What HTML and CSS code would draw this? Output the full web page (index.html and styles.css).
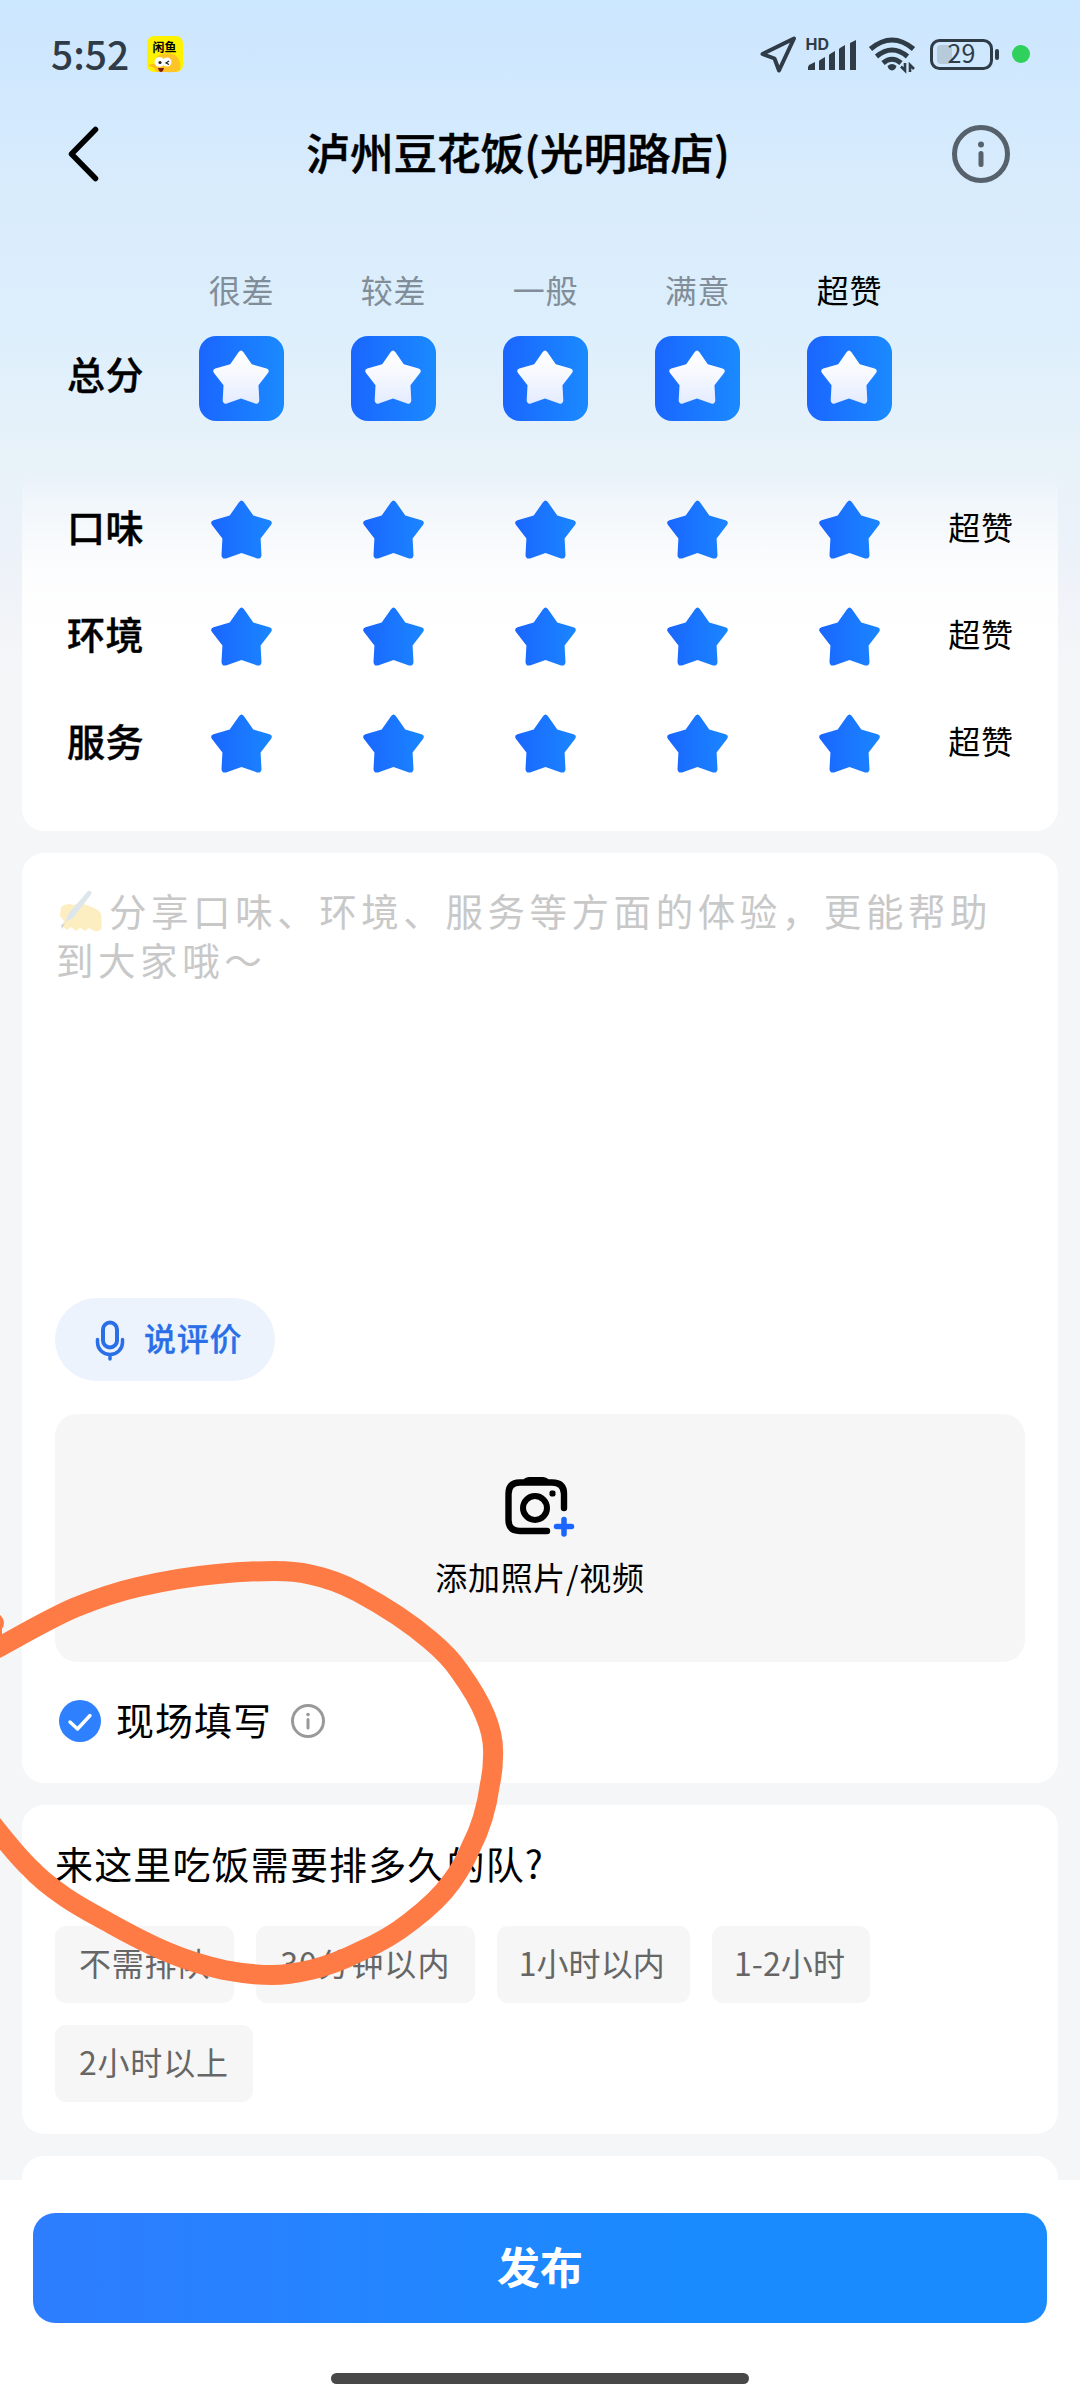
FILE: index.html
```html
<!DOCTYPE html>
<html lang="zh-CN">
<head>
<meta charset="utf-8">
<title>泸州豆花饭(光明路店)</title>
<link rel="stylesheet" href="styles.css">
</head>
<body>
<svg class="defs" width="0" height="0" aria-hidden="true">
  <defs>
    <linearGradient id="blue" x1="0" x2="1" y1="0" y2="0"><stop offset="0" stop-color="#1a66ff"/><stop offset="1" stop-color="#1a86ff"/></linearGradient>
    <linearGradient id="white" x1="0" x2="0" y1="0" y2="1"><stop offset="0" stop-color="#fff"/><stop offset=".4" stop-color="#f8faff"/><stop offset="1" stop-color="#e3ebff"/></linearGradient>
    <path id="star" d="M28 2.2Q30.500 -1.200 33 2.200L42.300 15.600L58.500 20.200Q62.300 21.600 60 25L49.600 38.600L50.500 55.200Q50 59.400 46 58.400L30.500 53L15 58.400Q11 59.400 10.500 55.200L11.400 38.600L1 25Q-1.300 21.600 2.500 20.200L18.700 15.600Z"/>
  </defs>
</svg>
<div class="screen">
  <header class="status">
    <div class="status-side">
      <span class="time">5:52</span>
      <svg class="app" width="38" height="38" viewBox="0 0 38 38">
        <rect x="1" y="1" width="36" height="36" rx="7" fill="#fdf200"/>
        <text class="app-name" x="18.500" y="17" text-anchor="middle">闲鱼</text>
        <path d="M9 35Q7 26 12 21Q19 16 29 20Q36 25 34 35Q30 38 21 37H14Q10 37 9 35Z" fill="#ffc527"/>
        <path d="M2 30l6-1 3 5z" fill="#ffb81c"/>
        <circle cx="13.500" cy="27" r="5" fill="#fff"/><circle cx="21" cy="27" r="4.500" fill="#fff"/>
        <circle cx="14" cy="27.500" r="1.600" fill="#222"/>
        <path d="M23 26l-3 2 3 1.500" fill="none" stroke="#222" stroke-width="1.200"/>
        <path d="M12 33h6q-1 4-3 4t-3-4z" fill="#7c1b12"/>
      </svg>
    </div>
    <svg class="indicators" width="280" height="44" viewBox="0 0 280 44">
      <path d="M2.500 22L34 6.500L19 38.500L14.500 26.500Z" fill="none" stroke="#2f3c48" stroke-width="4" stroke-linejoin="round"/>
      <text class="hd" x="45.500" y="18">HD</text>
      <g fill="#2f3c48">
        <path d="M49 33l6-3v8h-7v-3z"/><path d="M60 28l5-3v13h-6v-9z"/><path d="M70 22l5-3v19h-6V23z"/><path d="M80 16l5-3v25h-6V17z"/><path d="M90 11l6-3v30h-6z"/>
        <path d="M127.500 34q4.500-4 9 0q-1 4-4.500 4.500q-3.500-.5-4.500-4.500z"/>
      </g>
      <g fill="none" stroke="#2f3c48" stroke-width="5">
        <path d="M110.500 17Q132 -1 153.500 17"/><path d="M116.500 24.500Q132 11.500 147.500 24.500"/><path d="M123 31Q132 23.500 141 31"/>
      </g>
      <path d="M141 34.500l4 4V31M150 40V33l4 4" fill="none" stroke="#2f3c48" stroke-width="2.600"/>
      <rect x="171.500" y="8.500" width="60" height="28" rx="8" fill="none" stroke="#2f3c48" stroke-width="3"/>
      <rect x="177" y="13" width="15" height="19" rx="4" fill="#b7cad9"/>
      <rect x="235" y="17" width="4" height="11" rx="2" fill="#2f3c48"/>
      <text class="battery" x="201.500" y="31" text-anchor="middle">29</text>
      <circle cx="261" cy="22" r="9" fill="#2fd05c"/>
    </svg>
  </header>

  <nav class="nav">
    <svg width="40" height="60" viewBox="0 0 40 60"><path d="M28.500 5.500L4.500 30L28.500 54.500" fill="none" stroke="#000" stroke-width="5.500" stroke-linecap="round" stroke-linejoin="round"/></svg>
    <h1>泸州豆花饭(光明路店)</h1>
    <svg width="60" height="60" viewBox="0 0 60 60"><circle cx="30" cy="30" r="26.500" fill="none" stroke="#56616b" stroke-width="5"/><circle cx="30" cy="20.500" r="3" fill="#56616b"/><path d="M30 29.500v11" stroke="#56616b" stroke-width="5" stroke-linecap="round"/></svg>
  </nav>

  <section class="overall">
    <div class="grid captions"><i></i><span>很差</span><span>较差</span><span>一般</span><span>满意</span><span class="on">超赞</span></div>
    <div class="grid tiles"><b>总分</b>
      <div class="tile"><svg width="56" height="54" viewBox="0 0 61 59"><use href="#star" fill="url(#white)"/></svg></div>
      <div class="tile"><svg width="56" height="54" viewBox="0 0 61 59"><use href="#star" fill="url(#white)"/></svg></div>
      <div class="tile"><svg width="56" height="54" viewBox="0 0 61 59"><use href="#star" fill="url(#white)"/></svg></div>
      <div class="tile"><svg width="56" height="54" viewBox="0 0 61 59"><use href="#star" fill="url(#white)"/></svg></div>
      <div class="tile"><svg width="56" height="54" viewBox="0 0 61 59"><use href="#star" fill="url(#white)"/></svg></div>
    </div>
  </section>

  <section class="card ratings">
    <div class="grid row"><b>口味</b><svg class="star"><use href="#star"/></svg><svg class="star"><use href="#star"/></svg><svg class="star"><use href="#star"/></svg><svg class="star"><use href="#star"/></svg><svg class="star"><use href="#star"/></svg><span>超赞</span></div>
    <div class="grid row"><b>环境</b><svg class="star"><use href="#star"/></svg><svg class="star"><use href="#star"/></svg><svg class="star"><use href="#star"/></svg><svg class="star"><use href="#star"/></svg><svg class="star"><use href="#star"/></svg><span>超赞</span></div>
    <div class="grid row"><b>服务</b><svg class="star"><use href="#star"/></svg><svg class="star"><use href="#star"/></svg><svg class="star"><use href="#star"/></svg><svg class="star"><use href="#star"/></svg><svg class="star"><use href="#star"/></svg><span>超赞</span></div>
  </section>

  <section class="card review">
    <p class="placeholder"><svg class="pen" width="44" height="42" viewBox="0 0 44 42"><path d="M2 17Q8 12 14 15L22 13L35 18Q43 21 42.500 28V39Q40 42 35 41L30 38L26 41L21 38L17 41L12 37L8 40L3 36L5 31L1 26Z" fill="#fdeec2"/><path d="M29 1q4-1 3.500 3L14 28l-8 4 4-9z" fill="#dde6eb"/><path d="M2 35l4-2-3 6z" fill="#d5d3dc"/></svg>分享口味、环境、服务等方面的体验，更能帮助<br>到大家哦～</p>
    <button class="voice"><svg width="32" height="42" viewBox="0 0 32 42"><rect x="9" y="3.500" width="14" height="25" rx="7" fill="none" stroke="#2a6fe8" stroke-width="4"/><path d="M3.500 20.500v3a12.500 12 0 0 0 25 0v-3M16 36v4" fill="none" stroke="#2a6fe8" stroke-width="3.500" stroke-linecap="round"/></svg><span>说评价</span></button>
    <div class="upload">
      <svg width="80" height="64" viewBox="0 0 80 64"><path d="M49 57H22Q10.500 57 10.500 46V20Q10.500 8.500 22 8.500H54Q66 8.500 66 20V34" fill="none" stroke="#000" stroke-width="6.400" stroke-linecap="round"/><path d="M23 9Q26 3 31 3H45Q50 3 53 9Z"/><circle cx="37" cy="34" r="12" fill="none" stroke="#000" stroke-width="6"/><rect x="51.500" y="16.500" width="6" height="6" rx="2"/><path d="M66 45.500V60M58.500 52.500H73.500" stroke="#1a66ff" stroke-width="5.500" stroke-linecap="round"/></svg>
      <span>添加照片/视频</span>
    </div>
    <div class="onsite">
      <svg width="42" height="42" viewBox="0 0 42 42"><circle cx="21" cy="21" r="21" fill="#2e80ff"/><path d="M11 22L18.500 29L31 15.500" fill="none" stroke="#fff" stroke-width="3.400" stroke-linecap="round" stroke-linejoin="round"/></svg>
      <span>现场填写</span>
      <svg width="36" height="36" viewBox="0 0 36 36"><circle cx="18" cy="18" r="15.500" fill="none" stroke="#999" stroke-width="3"/><circle cx="18" cy="11.500" r="1.800" fill="#999"/><path d="M18 16.500v8.500" stroke="#999" stroke-width="3" stroke-linecap="round"/></svg>
    </div>
  </section>

  <section class="card queue">
    <h2>来这里吃饭需要排多久的队?</h2>
    <div class="chips"><span>不需排队</span><span class="wide">30分钟以内</span><span class="tight">1小时以内</span><span class="tight">1-2小时</span><span>2小时以上</span></div>
  </section>
  <section class="card next"></section>

  <footer class="footer"><button class="publish">发布</button><div class="home"></div></footer>

  <svg class="scribble" width="1080" height="2400" viewBox="0 0 1080 2400">
    <path d="M-8 1651C20 1636 48 1619 75 1607.500C96 1599 116 1592 138 1587C164 1581 190 1576.500 217 1574C236 1572 256 1571 275 1571C288 1571 299 1572 310 1574.500C327 1578 343 1584 358 1592C384 1606 409 1622 430 1640C442 1650 452 1660 460 1672C470 1686 479 1700 485 1715C491 1729 494 1742 493 1757C493 1766 492 1775 490 1784C487 1806 481 1828 471 1847C466 1859 460 1870 452 1881C440 1898 426 1910 410 1922C395 1934 379 1943 361 1951C345 1959 328 1966 310 1970C297 1973 285 1975 272 1975C256 1975 240 1973 224 1970C206 1966 189 1961 172 1954C152 1946 133 1936 114 1925.500C97 1916 81 1908 65 1897C52 1888 41 1880 31 1869C18 1857 8 1844 -8 1824"/>
    <circle cx="-6" cy="1623" r="10"/>
    <path d="M-8 1625V1645"/>
  </svg>
</div>
</body>
</html>
```
FILE: styles.css
```css
* { box-sizing: border-box; }
body { margin: 0; font-family: "Noto Sans CJK SC", sans-serif; color: #000; }
h1, h2, p { margin: 0; }
button { border: 0; font: inherit; }
svg { display: block; flex: none; }
.defs { position: absolute; }
.screen {
  position: relative; width: 1080px; height: 2400px; overflow: hidden;
  display: flex; flex-direction: column;
  background: linear-gradient(180deg, #cbe6ff 0, #d9ecfc 200px, #ddeffc 330px, #e8f2f9 460px, #edf2f9 560px, #f5f6f8 670px);
}
.status { height: 108px; padding: 0 40px 0 51px; display: flex; align-items: center; justify-content: space-between; }
.status-side { display: flex; align-items: center; gap: 18px; }
.time { width: 77px; padding-bottom: 3px; font: 500 39px/44px "Noto Sans CJK SC", sans-serif; color: #2f3c48; white-space: nowrap; }
.app-name { font-size: 12px; font-weight: 700; }
.hd { font: 700 16px Inter, sans-serif; fill: #2f3c48; }
.battery { font: 400 25px "Noto Sans CJK SC", sans-serif; fill: #2f3c48; }
.nav { height: 92px; padding: 0 69px 0 67px; display: flex; align-items: center; justify-content: space-between; }
.nav h1 { font-size: 43.600px; font-weight: 500; line-height: 60px; padding: 0 22px 6px 0; -webkit-text-stroke: .5px #000; }
.grid { display: grid; grid-template-columns: 98px repeat(5, 152px) 112px; justify-items: center; align-items: center; }
.grid b { font-size: 38px; font-weight: 500; line-height: 50px; white-space: nowrap; letter-spacing: .6px; justify-self: start; padding-bottom: 7px; -webkit-text-stroke: .4px #000; }
.grid .star + span { padding-bottom: 7px; }
.overall { height: 270px; padding: 65px 0 0 67px; }
.captions { height: 48px; font-size: 32px; letter-spacing: .8px; color: #818d98; }
.captions .on { color: #000; }
.captions span { padding-left: 1px; }
.tiles { margin-top: 23px; }
.tiles b { padding-bottom: 12px; }
.tile { width: 85px; height: 85px; border-radius: 17px; background: linear-gradient(90deg, #1a66ff, #1a8aff); display: grid; place-items: center; padding-bottom: 4px; }
.card { margin: 0 22px 22px; border-radius: 22px; background: #fff; flex: none; }
.ratings { height: 361px; padding: 6px 0 0 45px; background: linear-gradient(180deg, #fff0 0, #ffffff59 35px, #ffffffa6 75px, #ffffffd9 110px, #fff 170px); }
.row { height: 107px; font-size: 32px; letter-spacing: .8px; }
.star { width: 61px; height: 59px; fill: url(#blue); }
.review { height: 930px; padding: 32px 33px 0; display: flex; flex-direction: column; align-items: flex-start; }
.placeholder { height: 413px; font-size: 37.500px; line-height: 49px; letter-spacing: 4.550px; color: #c8c8c8; white-space: nowrap; padding-left: 1px; }
.pen { display: inline-block; vertical-align: -6px; margin: 0 6px 0 3px; }
.voice { width: 220px; height: 83px; border-radius: 42px; background: #ecf3fd; color: #2a6fe8; font-size: 32px; font-weight: 500; letter-spacing: .8px; display: flex; align-items: center; padding: 0 0 0 39px; gap: 18px; }
.voice span { padding-bottom: 5px; -webkit-text-stroke: .3px #2a6fe8; }
.upload { width: 970px; height: 248px; margin-top: 33px; border-radius: 22px; background: #f6f6f6; display: flex; flex-direction: column; align-items: center; padding-top: 60px; font-size: 32px; line-height: 48px; letter-spacing: .7px; }
.upload svg { margin-right: 4px; }
.upload span { margin-top: 14px; }
.onsite { height: 118px; padding-left: 4px; display: flex; align-items: center; font-size: 38px; letter-spacing: 1px; }
.onsite span { margin: 0 18px 0 15px; padding-bottom: 5px; }
.queue { height: 329px; padding: 30px 33px; }
.queue h2 { font-size: 38px; font-weight: 400; line-height: 56px; letter-spacing: 1.150px; }
.chips { margin-top: 35px; display: flex; flex-wrap: wrap; gap: 22px; font-size: 32px; letter-spacing: .8px; color: #666; }
.chips span { height: 77px; padding: 0 24px; border-radius: 11px; background: #f6f6f6; line-height: 72px; }
.chips .wide { letter-spacing: 1.150px; }
.chips .tight { letter-spacing: .1px; padding: 0 25px 0 22px; }
.next { height: 24px; margin-bottom: 0; border-radius: 22px 22px 0 0; }
.footer { flex: 1; background: #fff; padding: 33px 33px 0; display: flex; flex-direction: column; align-items: center; }
.publish { width: 1014px; height: 110px; border-radius: 22px; color: #fff; font-size: 43px; font-weight: 700; padding: 0 0 7px; background: linear-gradient(90deg, #2e7dff, #1a8bff 65%); }
.home { width: 418px; height: 11px; margin-top: 50px; border-radius: 6px; background: #484848; }
.scribble { position: absolute; left: 0; top: 0; pointer-events: none; }
.scribble path { fill: none; stroke: #ff7b46; stroke-width: 20; stroke-linejoin: round; }
.scribble circle { fill: #ff7b46; }
```
